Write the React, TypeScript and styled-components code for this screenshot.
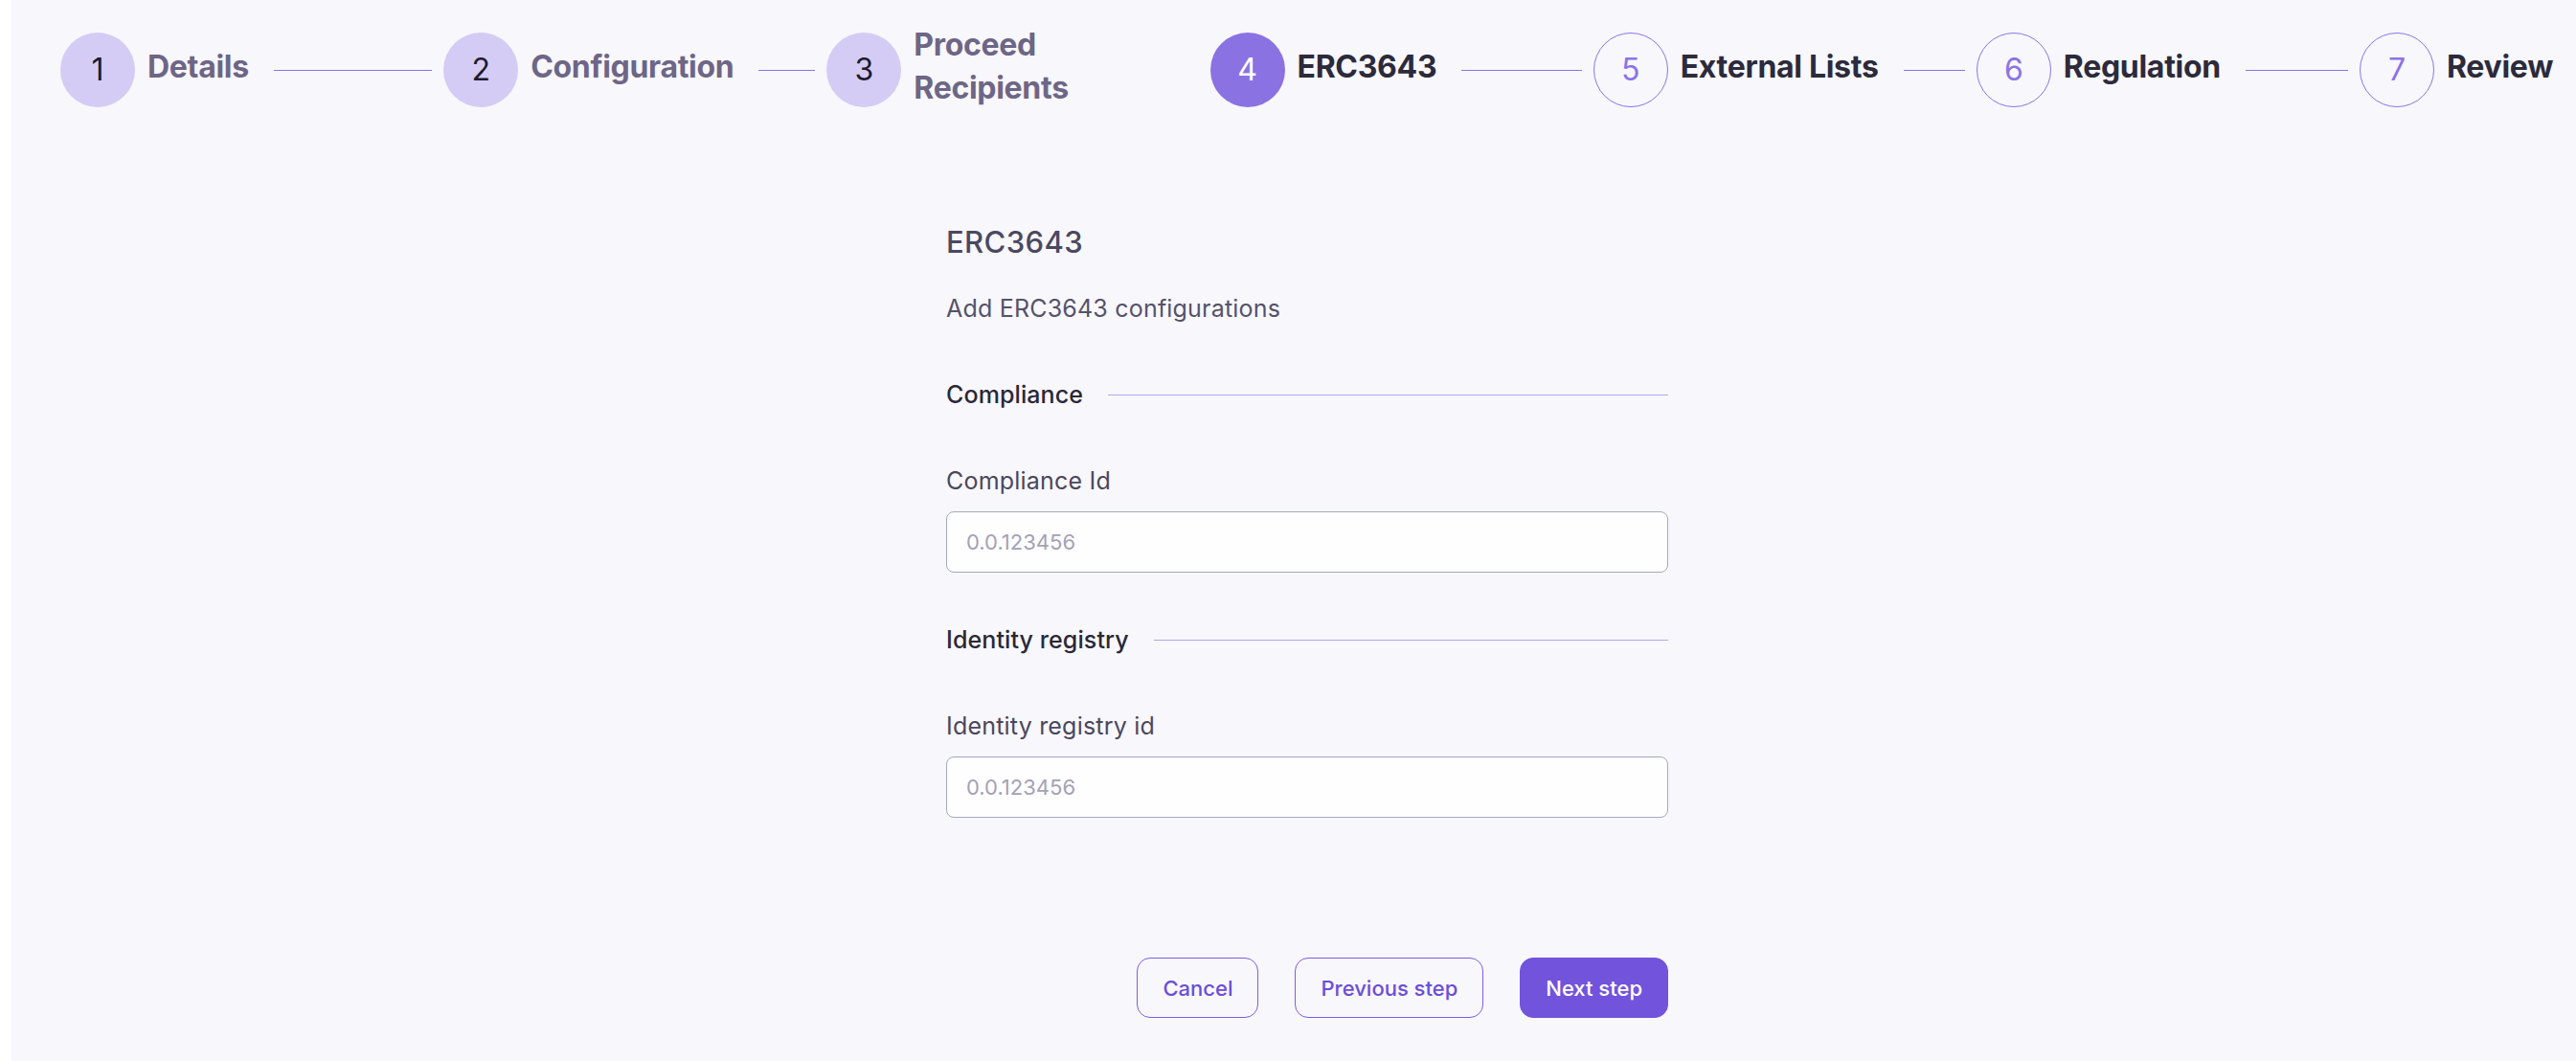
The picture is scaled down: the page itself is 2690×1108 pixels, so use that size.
import React from 'react';
import styled, { createGlobalStyle, css } from 'styled-components';

type Status = 'complete' | 'active' | 'upcoming';

const GlobalStyle = createGlobalStyle`
  html, body {
    margin: 0;
    padding: 0;
    background: #ffffff;
  }
  body {
    font-family: Inter, "Noto Sans", "Liberation Sans", sans-serif;
    -webkit-font-smoothing: antialiased;
  }
  * {
    box-sizing: border-box;
  }
`;

const Shell = styled.div`
  display: flex;
  min-height: 100vh;
`;

const Edge = styled.div`
  width: 12px;
  flex-shrink: 0;
  background: #ffffff;
`;

const Main = styled.main`
  flex: 1;
  display: flex;
  flex-direction: column;
  background: #f8f7fc;
  min-width: 0;
`;

/* stepper */

const StepperRow = styled.div`
  display: flex;
  align-items: center;
  padding: 24px 24px 0 51px;
`;

const StepItem = styled.div<{ $last: boolean }>`
  display: flex;
  align-items: center;
  min-width: 0;
  flex: ${p => (p.$last ? '0 0 auto' : '1 1 0')};
`;

const Circle = styled.div<{ $status: Status }>`
  width: 78px;
  height: 78px;
  flex-shrink: 0;
  border-radius: 50%;
  display: flex;
  align-items: center;
  justify-content: center;
  font-size: 32px;
  font-weight: 400;
  line-height: 1;
  ${p =>
    p.$status === 'complete' &&
    css`
      background: #d5ccf5;
      color: #1e1b2e;
    `}
  ${p =>
    p.$status === 'active' &&
    css`
      background: #8a72e3;
      color: #ffffff;
    `}
  ${p =>
    p.$status === 'upcoming' &&
    css`
      background: transparent;
      border: 1px solid #8b74e6;
      color: #8b74e6;
    `}
`;

const StepLabel = styled.div<{ $status: Status }>`
  margin: 0 0 8px 13px;
  font-size: 32px;
  line-height: 45px;
  font-weight: 700;
  letter-spacing: -0.3px;
  color: ${p => (p.$status === 'complete' ? '#6d6686' : '#2c2a3b')};
`;

const StepLine = styled.div`
  flex: 1 1 0;
  min-width: 0;
  height: 1px;
  margin: 0 12px 0 26px;
  background: #8676e0;
`;

/* form */

const FormArea = styled.div`
  display: flex;
  justify-content: center;
  padding-left: 28px;
`;

const Form = styled.section`
  width: 754px;
  margin-top: 113px;
  display: flex;
  flex-direction: column;
`;

const Title = styled.h2`
  margin: 0;
  font-size: 31px;
  line-height: 36px;
  font-weight: 500;
  letter-spacing: 0.4px;
  color: #4b4861;
`;

const Subtitle = styled.p`
  margin: 33px 0 0;
  font-size: 25px;
  line-height: 36px;
  font-weight: 400;
  letter-spacing: 0.2px;
  color: #55526a;
`;

const SectionRow = styled.div<{ $first?: boolean }>`
  margin-top: ${p => (p.$first ? '54px' : '52px')};
  display: flex;
  align-items: center;
  gap: 26px;
`;

const SectionTitle = styled.h3`
  margin: 0;
  font-size: 25px;
  line-height: 36px;
  font-weight: 500;
  letter-spacing: 0.1px;
  color: #2a2838;
  white-space: nowrap;
`;

const SectionLine = styled.div`
  flex: 1;
  height: 1px;
  background: #aea8ea;
`;

const Field = styled.label`
  margin-top: 54px;
  display: flex;
  flex-direction: column;
  gap: 14px;
`;

const FieldLabel = styled.span`
  font-size: 25px;
  line-height: 36px;
  font-weight: 400;
  letter-spacing: 0.2px;
  color: #4a475e;
`;

const Input = styled.input`
  height: 64px;
  width: 100%;
  padding: 0 20px;
  border: 1px solid #a3a9be;
  border-radius: 8px;
  background: #fefeff;
  font-family: inherit;
  font-size: 22px;
  color: #2a2838;
  outline: none;
  &::placeholder {
    color: #a4a1b5;
  }
`;

const Actions = styled.div`
  margin-top: 146px;
  display: flex;
  justify-content: flex-end;
  gap: 38px;
`;

const Button = styled.button<{ $primary?: boolean }>`
  height: 63px;
  padding: 0 26px;
  border-radius: 14px;
  font-family: inherit;
  font-size: 22px;
  font-weight: 500;
  cursor: pointer;
  border: 1px solid ${p => (p.$primary ? '#7253dc' : '#7c5ee0')};
  background: ${p => (p.$primary ? '#7253dc' : 'transparent')};
  color: ${p => (p.$primary ? '#ffffff' : '#6b4ed8')};
`;

const steps: { title: string; status: Status }[] = [
  { title: 'Details', status: 'complete' },
  { title: 'Configuration', status: 'complete' },
  { title: 'Proceed Recipients', status: 'complete' },
  { title: 'ERC3643', status: 'active' },
  { title: 'External Lists', status: 'upcoming' },
  { title: 'Regulation', status: 'upcoming' },
  { title: 'Review', status: 'upcoming' }
];

const Stepper: React.FunctionComponent = () => (
  <StepperRow>
    {steps.map((step, i) => {
      const last = i === steps.length - 1;
      return (
        <StepItem key={step.title} $last={last}>
          <Circle $status={step.status}>{i + 1}</Circle>
          <StepLabel $status={step.status}>{step.title}</StepLabel>
          {!last && <StepLine />}
        </StepItem>
      );
    })}
  </StepperRow>
);

const App = () => (
  <>
    <GlobalStyle />
    <Shell>
      <Edge />
      <Main>
        <Stepper />
        <FormArea>
          <Form>
            <Title>ERC3643</Title>
            <Subtitle>Add ERC3643 configurations</Subtitle>

            <SectionRow $first>
              <SectionTitle>Compliance</SectionTitle>
              <SectionLine />
            </SectionRow>
            <Field>
              <FieldLabel>Compliance Id</FieldLabel>
              <Input placeholder="0.0.123456" />
            </Field>

            <SectionRow>
              <SectionTitle>Identity registry</SectionTitle>
              <SectionLine />
            </SectionRow>
            <Field>
              <FieldLabel>Identity registry id</FieldLabel>
              <Input placeholder="0.0.123456" />
            </Field>

            <Actions>
              <Button>Cancel</Button>
              <Button>Previous step</Button>
              <Button $primary>Next step</Button>
            </Actions>
          </Form>
        </FormArea>
      </Main>
    </Shell>
  </>
);

export default App;
